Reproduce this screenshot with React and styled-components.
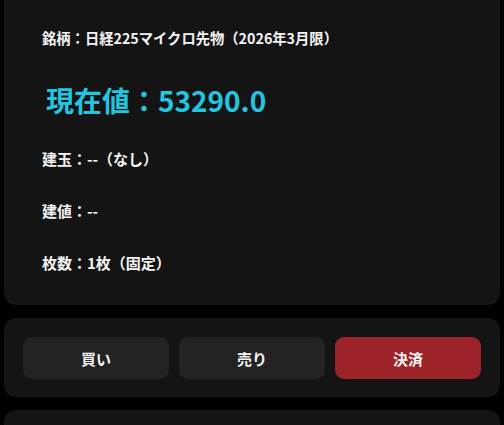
import React from 'react';
import styled, { createGlobalStyle } from 'styled-components';

const GlobalStyle = createGlobalStyle`
    html, body {
        margin: 0;
        padding: 0;
        background: #000;
        overflow: hidden;
    }
    body {
        font-family: "Noto Sans CJK JP", "Noto Sans", sans-serif;
        color: #f2f2f2;
    }
`

function App(){
    const buttons = [
        { label: '買い', variant: 'plain' },
        { label: '売り', variant: 'plain' },
        { label: '決済', variant: 'danger' },
    ];

    return (
        <Page>
            <GlobalStyle />
            <InfoCard>
                <Title>銘柄：日経225マイクロ先物（2026年3月限）</Title>
                <Price>現在値：53290.0</Price>
                <Rows>
                    <Row>建玉：--（なし）</Row>
                    <Row>建値：--</Row>
                    <Row>枚数：1枚（固定）</Row>
                </Rows>
            </InfoCard>
            <ActionCard>
                {buttons.map(b => (
                    <ActionButton key={b.label} $variant={b.variant}>{b.label}</ActionButton>
                ))}
            </ActionCard>
            <NextCard />
        </Page>
    )
}

export default App

const Page=styled.div`
    display: flex;
    flex-direction: column;
    gap: 13px;
    padding: 0 4px;
`

const Card=styled.div`
    background: #141414;
    border-radius: 12px;
`

const InfoCard=styled(Card)`
    border-radius: 0 0 12px 12px;
    padding: 27px 38px 31px;
    display: flex;
    flex-direction: column;
`

const Title=styled.div`
    font-size: 14.3px;
    font-weight: 700;
    line-height: 22px;
    color: #f4f4f4;
`

const Price=styled.div`
    margin-top: 32px;
    padding-left: 4px;
    font-size: 28px;
    font-weight: 700;
    line-height: 38px;
    color: #22c6e0;
`

const Rows=styled.div`
    margin-top: 29px;
    display: flex;
    flex-direction: column;
    gap: 30px;
`

const Row=styled.div`
    font-size: 15px;
    font-weight: 700;
    line-height: 22px;
    color: #f4f4f4;
`

const ActionCard=styled(Card)`
    padding: 19px 19px 18px;
    display: grid;
    grid-template-columns: repeat(3, 1fr);
    gap: 10px;
`

const ActionButton=styled.div`
    height: 42px;
    display: flex;
    align-items: center;
    justify-content: center;
    border-radius: 9px;
    font-size: 15px;
    font-weight: 700;
    color: #f4f4f4;
    background: ${p => p.$variant === 'danger' ? '#9c2329' : '#232323'};
`

const NextCard=styled(Card)`
    height: 60px;
`
